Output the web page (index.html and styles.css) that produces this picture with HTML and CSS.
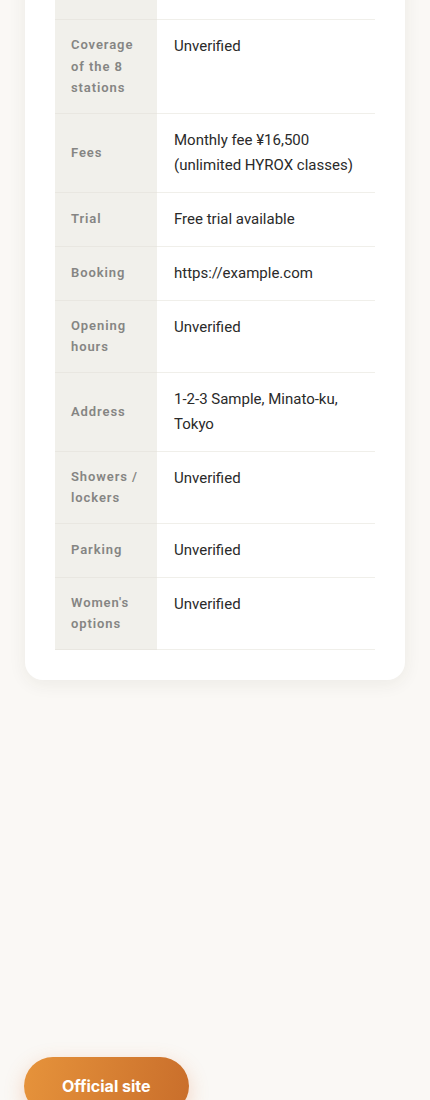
FILE: index.html
```html
<!DOCTYPE html>
<html lang="en">
<head>
    <meta charset="UTF-8">
    <meta name="viewport" content="width=device-width, initial-scale=1.0">
    <title>Gym details</title>
    <link rel="stylesheet" href="styles.css">
</head>
<body>
<div class="page">
    <!-- Gym details card -->
    <div class="card">
        <table class="info-table">
            <tr>
                <th>Name</th>
                <td>Sample HYROX Gym</td>
            </tr>
            <tr>
                <th>Category</th>
                <td>Authorized gym</td>
            </tr>
            <tr>
                <th>Coverage of the 8 stations</th>
                <td>Unverified</td>
            </tr>
            <tr>
                <th>Fees</th>
                <td>Monthly fee ¥16,500 (unlimited HYROX classes)</td>
            </tr>
            <tr>
                <th>Trial</th>
                <td>Free trial available</td>
            </tr>
            <tr>
                <th>Booking</th>
                <td>https://example.com</td>
            </tr>
            <tr>
                <th>Opening hours</th>
                <td>Unverified</td>
            </tr>
            <tr>
                <th>Address</th>
                <td>1-2-3 Sample, Minato-ku, Tokyo</td>
            </tr>
            <tr>
                <th>Showers / lockers</th>
                <td>Unverified</td>
            </tr>
            <tr>
                <th>Parking</th>
                <td>Unverified</td>
            </tr>
            <tr>
                <th>Women's options</th>
                <td>Unverified</td>
            </tr>
        </table>
    </div>

    <!-- Call to action -->
    <div class="cta">
        <a class="cta-button" href="https://example.com">Official site</a>
    </div>
</div>
</body>
</html>
```

FILE: styles.css
```css
/* Page */
body {
    font-family: Roboto, "Noto Sans", sans-serif;
    background-color: #faf8f5;
    margin: 0;
    color: #2a2a2a;
}

.page {
    padding: 0 25px;
    margin-top: -118px;
}

/* Card */
.card {
    background-color: #fff;
    border-radius: 18px;
    padding: 30px;
    box-shadow: 0 4px 18px rgba(60, 50, 30, 0.07);
}

/* Info table */
.info-table {
    width: 100%;
    border-collapse: collapse;
}

.info-table th {
    width: 70px;
    padding: 14px 16px;
    background-color: #f1f0eb;
    color: #858583;
    font-size: 13px;
    font-weight: 600;
    line-height: 21.5px;
    letter-spacing: 0.07em;
    text-align: left;
    vertical-align: middle;
    border-bottom: 1px solid #e9e7e1;
}

.info-table td {
    padding: 14px 16px 14px 17px;
    font-size: 15px;
    line-height: 25px;
    vertical-align: top;
    border-bottom: 1px solid #f0efea;
}

/* Call to action */
.cta {
    margin-top: 377px;
    display: flex;
}

.cta-button {
    display: inline-block;
    text-decoration: none;
    color: #fff;
    font-family: Inter, Roboto, sans-serif;
    font-size: 16px;
    font-weight: 700;
    padding: 0 38px;
    height: 58px;
    line-height: 58px;
    border-radius: 29px;
    margin-left: -1px;
    background: linear-gradient(100deg, #e6933b, #c96e2b);
    box-shadow: 0 6px 20px rgba(226, 120, 60, 0.28);
}
```
